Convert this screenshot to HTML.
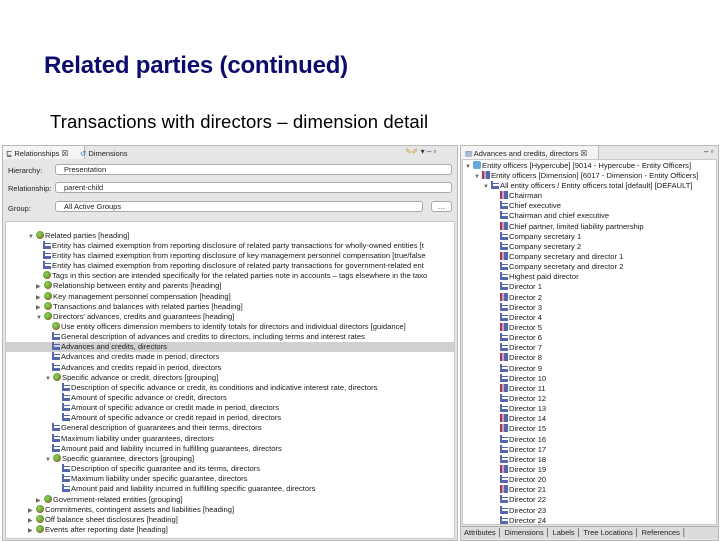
<!DOCTYPE html>
<html><head><style>
*{margin:0;padding:0;box-sizing:border-box}
body{width:720px;height:540px;background:#fff;position:relative;overflow:hidden;font-family:"Liberation Sans",sans-serif}
.t1{position:absolute;left:44px;top:52px;font-size:24px;font-weight:bold;color:#0c0c6e;white-space:nowrap;letter-spacing:-0.2px}
.t2{position:absolute;left:50px;top:111px;font-size:18.5px;color:#000;white-space:nowrap;letter-spacing:0.1px}
.pan{position:absolute;background:#e6e6e6;border:1px solid #b8b8b8}
.tab{position:absolute;font-size:7.5px;color:#222;white-space:nowrap}
.tree{position:absolute;background:#fff;border:1px solid #c8c8c8;overflow:hidden}
.r{position:absolute;height:10px;font-size:7.6px;line-height:10px;color:#1a1a1a;white-space:nowrap}
.i{display:inline-block;width:8px;height:8px;vertical-align:-1px;margin-right:1px}
.c{background:radial-gradient(circle at 40% 40%,#9c6 0,#6a3 50%,#b33 80%);border-radius:50%}
.e{border-left:2px solid #56a;border-bottom:2px solid #56a;background:linear-gradient(#56a 1px,transparent 1px) 0 2px/100% 3px}
.m{background:linear-gradient(90deg,#a35 30%,#fff 30%,#fff 45%,#56a 45%);}
.tri{display:inline-block;width:8px;font-size:6px;color:#666}
.lbl{position:absolute;font-size:7.5px;color:#222}
.sel{position:absolute;height:11px;background:#fff;border:1px solid #aaa;border-radius:3px;font-size:7.5px;line-height:9px;padding-left:8px;color:#222}
</style></head><body>
<div class="t1">Related parties (continued)</div>
<div class="t2">Transactions with directors – dimension detail</div>

<div class="pan" style="left:2px;top:145px;width:456px;height:396px"></div>
<div style="position:absolute;left:3px;top:146px;width:82px;height:13px;background:#f4f4f4;border-right:1px solid #bbb"></div>
<div class="tab" style="left:6px;top:149px">⊑ Relationships ☒</div>
<div class="tab" style="left:80px;top:149px"><span style="color:#36a">↺</span> Dimensions</div>
<div class="tab" style="left:405px;top:147px;color:#c93;font-size:8px">✎✐ <span style="color:#333">▾ ‒ ▫</span></div>
<div class="lbl" style="left:8px;top:166px">Hierarchy:</div>
<div class="lbl" style="left:8px;top:184px">Relationship:</div>
<div class="lbl" style="left:8px;top:204px">Group:</div>
<div class="sel" style="left:55px;top:164px;width:397px">Presentation</div>
<div class="sel" style="left:55px;top:182px;width:397px">parent-child</div>
<div class="sel" style="left:55px;top:201px;width:368px">All Active Groups</div>
<div class="sel" style="left:431px;top:201px;width:21px;padding:0;text-align:center">…</div>
<div class="tree" style="left:5px;top:221px;width:450px;height:318px"></div>
<div style="position:absolute;left:6px;top:342px;width:448px;height:10px;background:#d0d0d0"></div>

<div class="r" style="left:28px;top:231px"><span class="tri">▼</span><span class="i c"></span>Related parties [heading]</div>
<div class="r" style="left:43px;top:241px"><span class="i e"></span>Entity has claimed exemption from reporting disclosure of related party transactions for wholly-owned entities [t</div>
<div class="r" style="left:43px;top:251px"><span class="i e"></span>Entity has claimed exemption from reporting disclosure of key management personnel compensation [true/false</div>
<div class="r" style="left:43px;top:261px"><span class="i e"></span>Entity has claimed exemption from reporting disclosure of related party transactions for government-related ent</div>
<div class="r" style="left:43px;top:271px"><span class="i c"></span>Tags in this section are intended specifically for the related parties note in accounts – tags elsewhere in the taxo</div>
<div class="r" style="left:36px;top:281px"><span class="tri">▶</span><span class="i c"></span>Relationship between entity and parents [heading]</div>
<div class="r" style="left:36px;top:292px"><span class="tri">▶</span><span class="i c"></span>Key management personnel compensation [heading]</div>
<div class="r" style="left:36px;top:302px"><span class="tri">▶</span><span class="i c"></span>Transactions and balances with related parties [heading]</div>
<div class="r" style="left:36px;top:312px"><span class="tri">▼</span><span class="i c"></span>Directors' advances, credits and guarantees [heading]</div>
<div class="r" style="left:52px;top:322px"><span class="i c"></span>Use entity officers dimension members to identify totals for directors and individual directors [guidance]</div>
<div class="r" style="left:52px;top:332px"><span class="i e"></span>General description of advances and credits to directors, including terms and interest rates</div>
<div class="r" style="left:52px;top:342px"><span class="i e"></span>Advances and credits, directors</div>
<div class="r" style="left:52px;top:352px"><span class="i e"></span>Advances and credits made in period, directors</div>
<div class="r" style="left:52px;top:363px"><span class="i e"></span>Advances and credits repaid in period, directors</div>
<div class="r" style="left:45px;top:373px"><span class="tri">▼</span><span class="i c"></span>Specific advance or credit, directors [grouping]</div>
<div class="r" style="left:62px;top:383px"><span class="i e"></span>Description of specific advance or credit, its conditions and indicative interest rate, directors</div>
<div class="r" style="left:62px;top:393px"><span class="i e"></span>Amount of specific advance or credit, directors</div>
<div class="r" style="left:62px;top:403px"><span class="i e"></span>Amount of specific advance or credit made in period, directors</div>
<div class="r" style="left:62px;top:413px"><span class="i e"></span>Amount of specific advance or credit repaid in period, directors</div>
<div class="r" style="left:52px;top:423px"><span class="i e"></span>General description of guarantees and their terms, directors</div>
<div class="r" style="left:52px;top:434px"><span class="i e"></span>Maximum liability under guarantees, directors</div>
<div class="r" style="left:52px;top:444px"><span class="i e"></span>Amount paid and liability incurred in fulfilling guarantees, directors</div>
<div class="r" style="left:45px;top:454px"><span class="tri">▼</span><span class="i c"></span>Specific guarantee, directors [grouping]</div>
<div class="r" style="left:62px;top:464px"><span class="i e"></span>Description of specific guarantee and its terms, directors</div>
<div class="r" style="left:62px;top:474px"><span class="i e"></span>Maximum liability under specific guarantee, directors</div>
<div class="r" style="left:62px;top:484px"><span class="i e"></span>Amount paid and liability incurred in fulfilling specific guarantee, directors</div>
<div class="r" style="left:36px;top:495px"><span class="tri">▶</span><span class="i c"></span>Government-related entities [grouping]</div>
<div class="r" style="left:28px;top:505px"><span class="tri">▶</span><span class="i c"></span>Commitments, contingent assets and liabilities [heading]</div>
<div class="r" style="left:28px;top:515px"><span class="tri">▶</span><span class="i c"></span>Off balance sheet disclosures [heading]</div>
<div class="r" style="left:28px;top:525px"><span class="tri">▶</span><span class="i c"></span>Events after reporting date [heading]</div>

<div class="pan" style="left:460px;top:145px;width:259px;height:396px"></div>
<div style="position:absolute;left:461px;top:146px;width:138px;height:13px;background:#f4f4f4;border-right:1px solid #bbb"></div>
<div class="tab" style="left:465px;top:149px"><span style="color:#36a">▤</span> Advances and credits, directors ☒</div>
<div class="tab" style="left:704px;top:147px;font-size:8px">‒ ▫</div>
<div class="tree" style="left:462px;top:159px;width:255px;height:366px"></div>
<div style="position:absolute;left:461px;top:526px;width:257px;height:13px;background:#dcdcdc;border-top:1px solid #aaa"></div>
<div class="tab" style="left:464px;top:528px">Attributes │ Dimensions │ Labels │ Tree Locations │ References │</div>

<div class="r" style="left:465px;top:161px"><span class="tri">▼</span><span class="i" style="background:#6ad;border-radius:2px"></span>Entity officers [Hypercube] [9014 - Hypercube - Entity Officers]</div>
<div class="r" style="left:474px;top:171px"><span class="tri">▼</span><span class="i m"></span>Entity officers [Dimension] [6017 - Dimension - Entity Officers]</div>
<div class="r" style="left:483px;top:181px"><span class="tri">▼</span><span class="i e"></span>All entity officers / Entity officers total [default] [DEFAULT]</div>
<div class="r" style="left:500px;top:191px"><span class="i m"></span>Chairman</div>
<div class="r" style="left:500px;top:201px"><span class="i e"></span>Chief executive</div>
<div class="r" style="left:500px;top:211px"><span class="i e"></span>Chairman and chief executive</div>
<div class="r" style="left:500px;top:222px"><span class="i m"></span>Chief partner, limited liability partnership</div>
<div class="r" style="left:500px;top:232px"><span class="i e"></span>Company secretary 1</div>
<div class="r" style="left:500px;top:242px"><span class="i e"></span>Company secretary 2</div>
<div class="r" style="left:500px;top:252px"><span class="i m"></span>Company secretary and director 1</div>
<div class="r" style="left:500px;top:262px"><span class="i e"></span>Company secretary and director 2</div>
<div class="r" style="left:500px;top:272px"><span class="i e"></span>Highest paid director</div>
<div class="r" style="left:500px;top:282px"><span class="i e"></span>Director 1</div>
<div class="r" style="left:500px;top:293px"><span class="i m"></span>Director 2</div>
<div class="r" style="left:500px;top:303px"><span class="i e"></span>Director 3</div>
<div class="r" style="left:500px;top:313px"><span class="i e"></span>Director 4</div>
<div class="r" style="left:500px;top:323px"><span class="i m"></span>Director 5</div>
<div class="r" style="left:500px;top:333px"><span class="i e"></span>Director 6</div>
<div class="r" style="left:500px;top:343px"><span class="i e"></span>Director 7</div>
<div class="r" style="left:500px;top:353px"><span class="i m"></span>Director 8</div>
<div class="r" style="left:500px;top:364px"><span class="i e"></span>Director 9</div>
<div class="r" style="left:500px;top:374px"><span class="i e"></span>Director 10</div>
<div class="r" style="left:500px;top:384px"><span class="i m"></span>Director 11</div>
<div class="r" style="left:500px;top:394px"><span class="i e"></span>Director 12</div>
<div class="r" style="left:500px;top:404px"><span class="i e"></span>Director 13</div>
<div class="r" style="left:500px;top:414px"><span class="i m"></span>Director 14</div>
<div class="r" style="left:500px;top:424px"><span class="i m"></span>Director 15</div>
<div class="r" style="left:500px;top:435px"><span class="i e"></span>Director 16</div>
<div class="r" style="left:500px;top:445px"><span class="i e"></span>Director 17</div>
<div class="r" style="left:500px;top:455px"><span class="i e"></span>Director 18</div>
<div class="r" style="left:500px;top:465px"><span class="i m"></span>Director 19</div>
<div class="r" style="left:500px;top:475px"><span class="i e"></span>Director 20</div>
<div class="r" style="left:500px;top:485px"><span class="i m"></span>Director 21</div>
<div class="r" style="left:500px;top:495px"><span class="i e"></span>Director 22</div>
<div class="r" style="left:500px;top:506px"><span class="i e"></span>Director 23</div>
<div class="r" style="left:500px;top:516px"><span class="i e"></span>Director 24</div>
</body></html>
